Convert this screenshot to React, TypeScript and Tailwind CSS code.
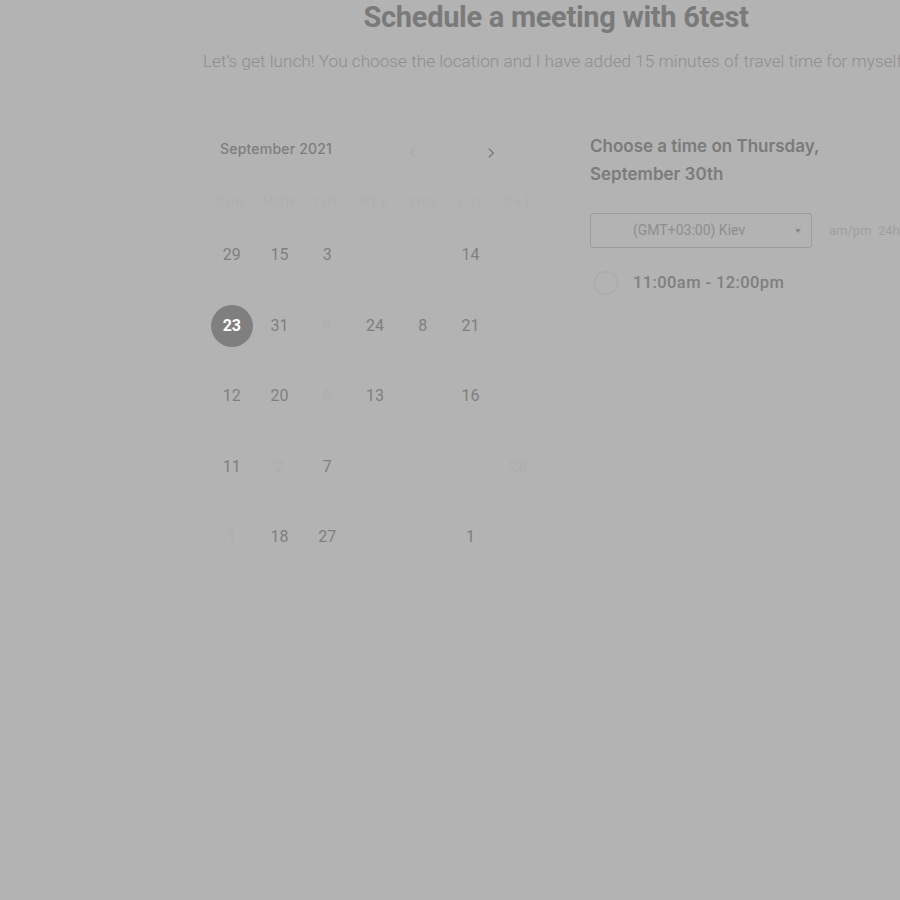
import React from "react";

type Day = { n: string; faint?: boolean; selected?: boolean } | null;

const weeks: Day[][] = [
  [{ n: "29" }, { n: "15" }, { n: "3" }, null, null, { n: "14" }, null],
  [{ n: "23", selected: true }, { n: "31" }, { n: "9", faint: true }, { n: "24" }, { n: "8" }, { n: "21" }, null],
  [{ n: "12" }, { n: "20" }, { n: "5", faint: true }, { n: "13" }, null, { n: "16" }, null],
  [{ n: "11" }, { n: "2", faint: true }, { n: "7" }, null, null, null, { n: "28", faint: true }],
  [{ n: "1", faint: true }, { n: "18" }, { n: "27" }, null, null, { n: "1" }, null],
];

const weekdays = ["SUN", "MON", "TUE", "WED", "THU", "FRI", "SAT"];

const Chevron = ({ left, className }: { left?: boolean; className?: string }) => (
  <svg width="14" height="14" viewBox="0 0 24 24" className={className} fill="none" stroke="currentColor" strokeWidth="2.5" strokeLinecap="round" strokeLinejoin="round">
    <path d={left ? "M15 5l-7 7 7 7" : "M9 5l7 7-7 7"} />
  </svg>
);

export default function App() {
  return (
    <div className="w-full h-[900px] bg-[#b3b3b3] overflow-hidden" style={{ fontFamily: "Roboto, sans-serif" }}>
      {/* Header */}
      <div className="ml-[203px] w-[706px] text-center">
        <h1 className="pt-[0px] text-[29px] leading-[34px] font-bold text-[#7a7a7a] tracking-[-0.3px]">
          Schedule a meeting with 6test
        </h1>
        <p className="mt-[15px] text-[17.2px] leading-[24px] font-light text-[#8e8e8e] whitespace-nowrap text-left">
          Let’s get lunch! You choose the location and I have added 15 minutes of travel time for myself.
        </p>
      </div>

      <div className="flex mt-[55px] ml-[208px]">
        {/* Calendar */}
        <div className="w-[334px] shrink-0">
          <div className="flex items-center h-[40px] pl-[12px] pr-[44px]">
            <span className="text-[14px] font-medium text-[#7d7d7d] tracking-[0.2px]" style={{ fontFamily: "Inter, sans-serif" }}>
              September 2021
            </span>
            <div className="ml-auto flex items-center gap-[64px] pt-[10px]">
              <Chevron left className="text-[#ababab]" />
              <Chevron className="text-[#7d7d7d]" />
            </div>
          </div>
          <div className="grid grid-cols-7 mt-[22px] h-[24px] items-center">
            {weekdays.map((d) => (
              <div key={d} className="text-center text-[12px] tracking-[2px] text-[#afafaf]">
                {d}
              </div>
            ))}
          </div>
          <div className="mt-[6px]">
            {weeks.map((w, i) => (
              <div key={i} className="grid grid-cols-7 h-[70.5px] items-center">
                {w.map((d, j) => (
                  <div key={j} className="flex justify-center">
                    {d ? (
                      d.selected ? (
                        <div className="w-[42px] h-[42px] rounded-full bg-[#7f7f7f] flex items-center justify-center text-white text-[16px] font-bold">
                          {d.n}
                        </div>
                      ) : (
                        <span className={d.faint ? "text-[16px] text-[#aeaeae]" : "text-[16px] text-[#7f7f7f]"}>{d.n}</span>
                      )
                    ) : null}
                  </div>
                ))}
              </div>
            ))}
          </div>
        </div>

        {/* Time picker */}
        <div className="ml-[48px] w-[320px] shrink-0">
          <div className="text-[17px] leading-[28px] font-semibold text-[#7b7b7b] mt-[4px]" style={{ fontFamily: "Inter, sans-serif" }}>
            Choose a time on Thursday,
            <br />
            September 30th
          </div>
          <div className="flex items-center mt-[25px]">
            <div className="relative w-[222px] h-[35px] border border-[#9c9c9c] rounded-[3px] flex items-center">
              <span className="ml-[42px] text-[14px] text-[#8e8e8e]">(GMT+03:00) Kiev</span>
              <span className="absolute right-[10px] top-[15px] w-0 h-0 border-l-[3.5px] border-r-[3.5px] border-t-[4px] border-l-transparent border-r-transparent border-t-[#8a8a8a]" />
            </div>
            <span className="ml-[17px] text-[13px] text-[#a0a0a0] whitespace-nowrap">am/pm&nbsp; 24h</span>
          </div>
          <div className="flex items-center mt-[23px] ml-[4px]">
            <div className="w-[24px] h-[24px] rounded-full border border-[#a8a8a8]" />
            <span className="ml-[15px] text-[16.5px] font-medium text-[#7f7f7f] tracking-[0.4px]">11:00am - 12:00pm</span>
          </div>
        </div>
      </div>
    </div>
  );
}
